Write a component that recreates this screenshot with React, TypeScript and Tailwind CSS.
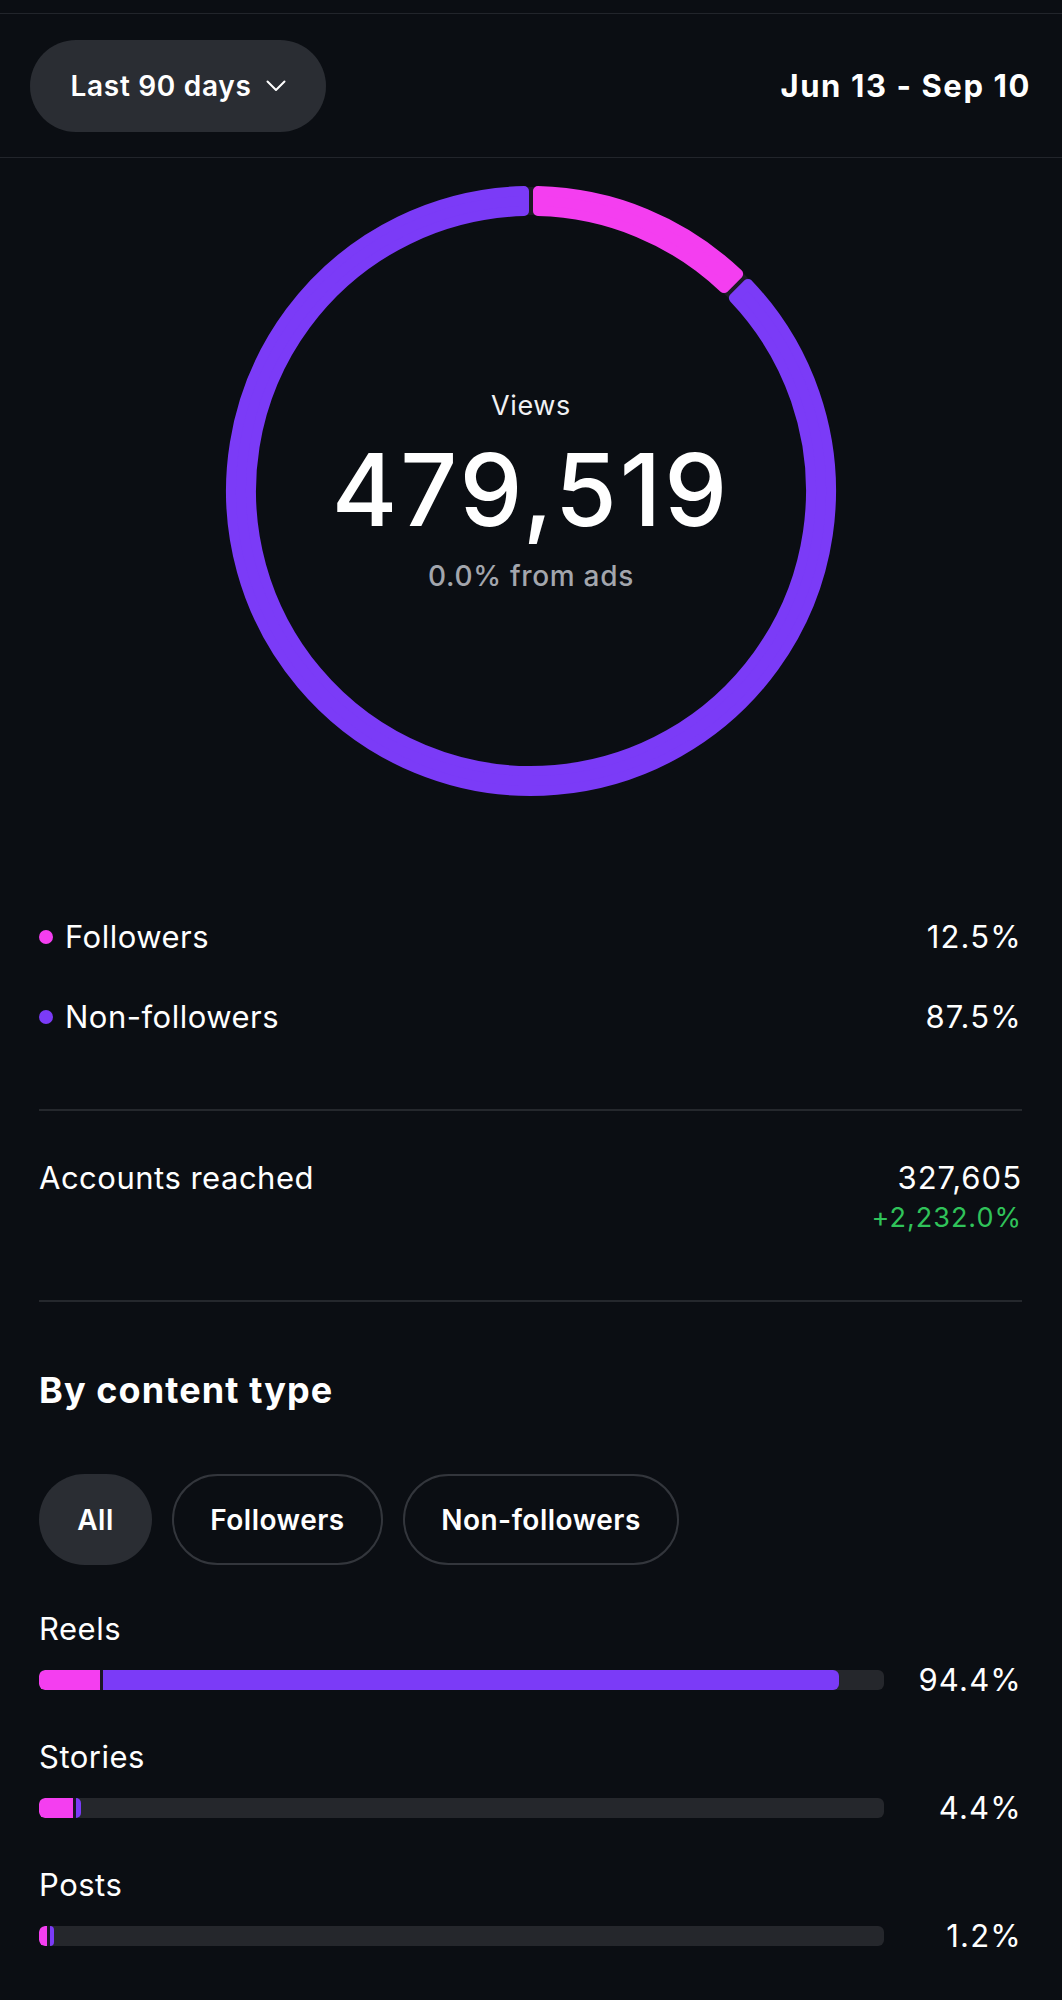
import React from "react";

const PINK = "#f43ef0";
const PURPLE = "#7b3bf7";

function polar(cx: number, cy: number, r: number, deg: number) {
  const a = (deg * Math.PI) / 180;
  return [cx + r * Math.sin(a), cy - r * Math.cos(a)];
}

function sector(cx: number, cy: number, ro: number, ri: number, a0: number, a1: number) {
  const off = 7;
  const ao0 = a0 + ((off / ro) * 180) / Math.PI;
  const ao1 = a1 - ((off / ro) * 180) / Math.PI;
  const ai0 = a0 + ((off / ri) * 180) / Math.PI;
  const ai1 = a1 - ((off / ri) * 180) / Math.PI;
  const large = a1 - a0 > 180 ? 1 : 0;
  const [x1, y1] = polar(cx, cy, ro, ao0);
  const [x2, y2] = polar(cx, cy, ro, ao1);
  const [x3, y3] = polar(cx, cy, ri, ai1);
  const [x4, y4] = polar(cx, cy, ri, ai0);
  return `M ${x1} ${y1} A ${ro} ${ro} 0 ${large} 1 ${x2} ${y2} L ${x3} ${y3} A ${ri} ${ri} 0 ${large} 0 ${x4} ${y4} Z`;
}

function Donut() {
  const c = 305;
  const ro = 300;
  const ri = 280;
  return (
    <svg width="610" height="610" viewBox="0 0 610 610" className="overflow-visible [grid-area:1/1]">
      <circle cx={c} cy={c} r={290} fill="none" stroke="#1c1a24" strokeWidth="28" />
      <path d={sector(c, c, ro, ri, 0, 45)} fill={PINK} stroke={PINK} strokeWidth="10" strokeLinejoin="round" />
      <path d={sector(c, c, ro, ri, 45, 360)} fill={PURPLE} stroke={PURPLE} strokeWidth="10" strokeLinejoin="round" />
    </svg>
  );
}

const bars = [
  { label: "Reels", value: "94.4%", pink: 61, purple: 736 },
  { label: "Stories", value: "4.4%", pink: 34, purple: 5 },
  { label: "Posts", value: "1.2%", pink: 8, purple: 4 },
];

export default function App() {
  return (
    <div
      className="w-[1062px] min-h-[2000px] bg-[#0b0e13] text-white"
      style={{ fontFamily: "Inter, 'Noto Sans', sans-serif" }}
    >
      <div className="h-[13px]" />
      <div className="border-t border-b border-[#22252b] h-[145px] flex items-center justify-between pl-[30px] pr-[31px]">
        <div className="h-[92px] w-[296px] rounded-full bg-[#2a2d33] flex items-center justify-center gap-[14px]">
          <span className="text-[28px] leading-[36px] font-semibold tracking-[0.7px]">Last 90 days</span>
          <svg width="20" height="12" viewBox="0 0 20 12" fill="none">
            <path d="M1.5 1.5 L10 10 L18.5 1.5" stroke="white" strokeWidth="2" strokeLinecap="round" strokeLinejoin="round" />
          </svg>
        </div>
        <span className="text-[31px] leading-[40px] font-bold tracking-[1.6px]">Jun 13 - Sep 10</span>
      </div>

      <div className="mt-[28px] grid place-items-center">
        <Donut />
        <div className="[grid-area:1/1] flex flex-col items-center">
          <span className="text-[27px] leading-[32px] tracking-[0.6px] text-[#f1f1f3]">Views</span>
          <span className="text-[100px] leading-[100px] font-medium tracking-[3px] mt-[18px]">479,519</span>
          <span className="text-[28px] leading-[32px] font-medium tracking-[0.7px] text-[#a3a6ad] mt-[20px]">0.0% from ads</span>
        </div>
      </div>

      <div className="pl-[39px] pr-[40px]">
        <div className="mt-[123px] flex items-center justify-between h-[36px]">
          <div className="flex items-center gap-[12px]">
            <span className="w-[14px] h-[14px] rounded-full bg-[#f43ef0]" />
            <span className="text-[31px] leading-[36px] tracking-[0.5px]">Followers</span>
          </div>
          <span className="text-[31px] leading-[36px] tracking-[1.2px]">12.5%</span>
        </div>
        <div className="mt-[44px] flex items-center justify-between h-[36px]">
          <div className="flex items-center gap-[12px]">
            <span className="w-[14px] h-[14px] rounded-full bg-[#7b3bf7]" />
            <span className="text-[31px] leading-[36px] tracking-[0.5px]">Non-followers</span>
          </div>
          <span className="text-[31px] leading-[36px] tracking-[1.2px]">87.5%</span>
        </div>

        <div className="mt-[74px] h-[2px] bg-[#25282d]" />

        <div className="mt-[49px] flex justify-between">
          <span className="text-[31px] leading-[36px] tracking-[0.5px]">Accounts reached</span>
          <div className="flex flex-col items-end">
            <span className="text-[31px] leading-[36px] tracking-[1px]">327,605</span>
            <span className="mt-[6px] text-[27px] leading-[32px] tracking-[1px] text-[#30c35a]">+2,232.0%</span>
          </div>
        </div>

        <div className="mt-[66px] h-[2px] bg-[#25282d]" />

        <div className="mt-[66px] text-[36px] leading-[44px] font-bold tracking-[1.1px]">By content type</div>

        <div className="mt-[62px] flex gap-[20px]">
          <div className="h-[91px] w-[113px] rounded-full bg-[#2a2d33] flex items-center justify-center text-[28px] font-semibold tracking-[0.5px]">All</div>
          <div className="h-[91px] w-[211px] rounded-full border-2 border-[#33363c] flex items-center justify-center text-[28px] font-semibold tracking-[0.5px]">Followers</div>
          <div className="h-[91px] w-[276px] rounded-full border-2 border-[#33363c] flex items-center justify-center text-[28px] font-semibold tracking-[0.5px]">Non-followers</div>
        </div>

        <div className="mt-[46px] flex flex-col gap-[43px]">
          {bars.map((b) => (
            <div key={b.label} className="flex flex-col">
              <span className="text-[31px] leading-[36px] tracking-[0.5px]">{b.label}</span>
              <div className="mt-[17px] h-[32px] flex items-center">
                <div className="flex-1 h-[20px] rounded-[6px] bg-[#25272c] flex overflow-hidden">
                  <div className="h-full rounded-l-[6px] bg-[#f43ef0]" style={{ width: b.pink }} />
                  <div className="h-full w-[3px] bg-[#1a1626]" />
                  <div className="h-full rounded-r-[6px] bg-[#7b3bf7]" style={{ width: b.purple }} />
                </div>
                <span className="w-[138px] text-right text-[31px] leading-[36px] tracking-[1.2px]">{b.value}</span>
              </div>
            </div>
          ))}
        </div>
      </div>
    </div>
  );
}
